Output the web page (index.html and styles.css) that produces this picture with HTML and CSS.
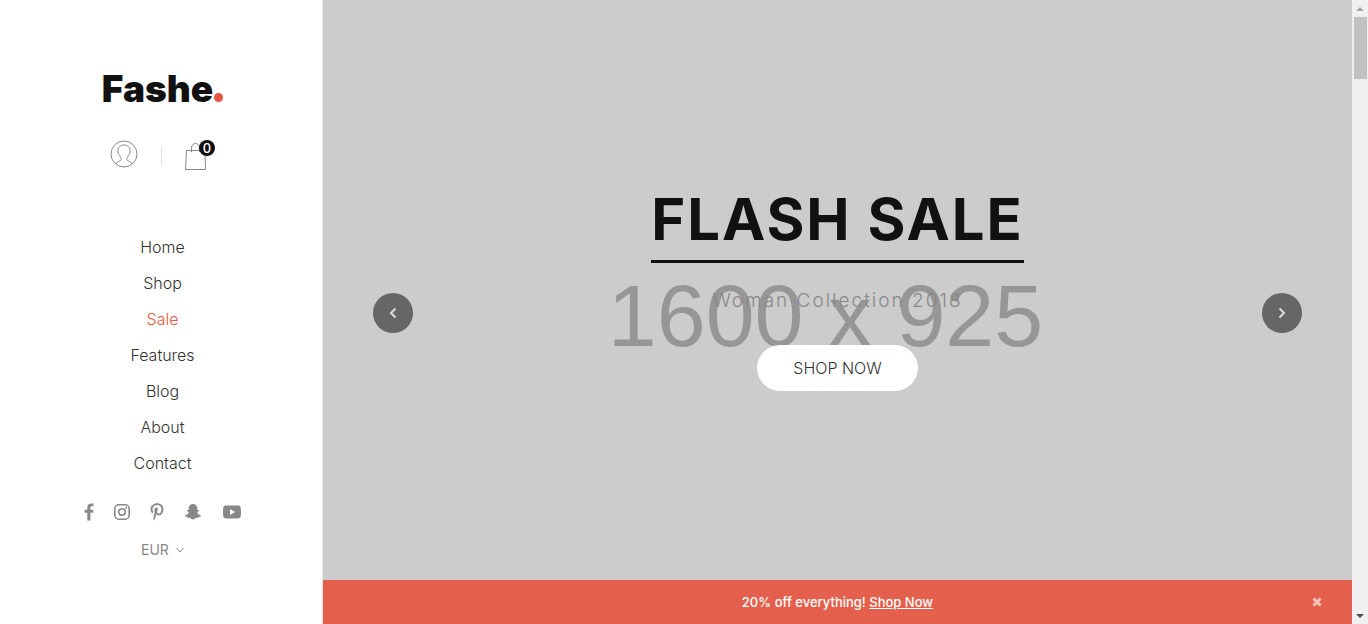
FILE: index.html
```html
<!DOCTYPE html>
<html lang="en">
<head>
<meta charset="utf-8">
<meta name="viewport" content="width=device-width, initial-scale=1">
<title>Fashe</title>
<link rel="stylesheet" href="styles.css">
</head>
<body>
<div class="page">
  <header class="sidebar">
    <a class="logo" href="#">Fashe<span class="logo-dot"></span></a>
    <div class="tools">
      <a class="tool account" href="#" aria-label="Account">
        <svg width="28" height="28" viewBox="0 0 28 28" fill="none" stroke="#888" stroke-width="1"><circle cx="14" cy="14" r="13"/><path d="M6 24C6.500 21.500 10.700 21.500 11.200 19.500C11.500 18 10 17 9.500 15C8.200 14.500 7.800 12.500 8 10.500C8 7 10.500 5 14 5C17.500 5 20 7 20 10.500C20.200 12.500 19.800 14.500 18.500 15C18 17 16.500 18 16.800 19.500C17.300 21.500 21.500 21.500 22 24"/></svg>
      </a>
      <span class="divider"></span>
      <a class="tool cart" href="#" aria-label="Cart">
        <svg width="22" height="28" viewBox="0 0 22 28" fill="none" stroke="#888" stroke-width="1"><path d="M1.500 7.500H20L20.500 26.500H.5ZM6.500 9V5C6.500 -1 14.500 -1 14.500 5V9"/></svg>
        <span class="badge">0</span>
      </a>
    </div>
    <nav class="menu">
      <a href="#">Home</a>
      <a href="#">Shop</a>
      <a class="active" href="#">Sale</a>
      <a href="#">Features</a>
      <a href="#">Blog</a>
      <a href="#">About</a>
      <a href="#">Contact</a>
    </nav>
    <div class="social">
      <a href="#" aria-label="Facebook"><svg width="10" height="18" viewBox="0 0 10 18"><path d="M9.500.6V3.300H7.900C6.700 3.300 6.400 3.900 6.400 4.800V6.700H9.400L9 9.700H6.400V17.400H3.300V9.700H.6V6.700H3.300V4.400C3.300 1.800 4.900.400 7.200.400C8.300.400 9.200.5 9.500.6Z"/></svg></a>
      <a href="#" aria-label="Instagram"><svg width="16" height="18" viewBox="0 0 16 18"><g fill="none" stroke="#888" stroke-width="1.600"><rect x=".8" y="1.800" width="14.400" height="14.400" rx="4"/><circle cx="8" cy="9" r="3.300"/></g><circle cx="12.200" cy="4.800" r="1"/></svg></a>
      <a href="#" aria-label="Pinterest"><svg width="14" height="18" viewBox="0 0 14 18"><path d="M.5 6.300C.5 2.700 3.800.3 7.300.3C10.700.3 13.400 2.600 13.400 5.900C13.400 9.300 11.600 12.300 8.700 12.300C7.700 12.300 6.700 11.800 6.300 11C5.500 14 5.300 15.200 3.800 17.500L3.500 17.600C3 14.700 4 12 4.700 9.300C3.800 7.700 4.400 4.400 6.600 4.400C9.400 4.400 6.800 8.400 7.100 9.600C7.300 10.200 8 10.600 8.600 10.600C10.700 10.600 11.400 7.500 11.400 5.900C11.400 3.500 9.500 2 7.200 2C4.600 2 2.500 3.800 2.500 6.500C2.500 7.800 3.300 8.400 3.300 8.700C3.300 9 3 10.200 2.600 10.200C2 10.200.5 9.100.5 6.300Z"/></svg></a>
      <a href="#" aria-label="Snapchat"><svg width="18" height="18" viewBox="0 0 18 18"><path d="M9 1C11.700 1 13.300 2.800 13.300 5C13.300 5.700 13.200 6.400 13.200 7C13.800 7.300 14.400 6.800 14.900 7.100C15.600 7.700 13.800 8.400 13.400 8.900C13 10 15 12.100 17 12.400C17.500 13.200 15.800 13.600 14.900 13.800C14.700 14.100 14.700 14.800 14.400 14.800C13.500 14.800 12.700 14.600 11.900 15.100C10.900 15.700 10.300 16.400 9 16.400C7.700 16.400 7.100 15.700 6.100 15.100C5.300 14.600 4.500 14.800 3.600 14.800C3.300 14.800 3.300 14.100 3.100 13.800C2.200 13.600.5 13.200 1 12.400C3 12.100 5 10 4.600 8.900C4.200 8.400 2.400 7.700 3.100 7.100C3.600 6.800 4.200 7.300 4.800 7C4.800 6.400 4.700 5.700 4.700 5C4.700 2.800 6.300 1 9 1Z"/></svg></a>
      <a href="#" aria-label="YouTube"><svg width="20" height="18" viewBox="0 0 20 18"><path fill-rule="evenodd" d="M4 2.600Q10 2.200 16 2.600C18.500 2.800 19 4 19 9S18.500 15.200 16 15.400Q10 15.800 4 15.400C1.500 15.200 1 14 1 9S1.500 2.800 4 2.600ZM8 6V12L13 9Z"/></svg></a>
    </div>
    <label class="currency" aria-label="Currency">
      <select><option>EUR</option><option>USD</option></select>
      <svg width="8" height="8" viewBox="0 0 8 8" fill="none" stroke="#888"><path d="M.5 2L4 6L7.500 2"/></svg>
    </label>
  </header>

  <main class="hero">
    <div class="placeholder" aria-hidden="true">1600 x 925</div>
    <div class="slide">
      <button class="arrow" aria-label="Previous"><svg width="8" height="12" viewBox="0 0 8 12"><path d="M6.500 1.500L2 6L6.500 10.500"/></svg></button>
      <div class="caption">
        <h1>FLASH SALE</h1>
        <p>Woman Collection 2018</p>
        <a class="shop" href="#">SHOP NOW</a>
      </div>
      <button class="arrow" aria-label="Next"><svg width="8" height="12" viewBox="0 0 8 12"><path d="M1.500 1.500L6 6L1.500 10.500"/></svg></button>
    </div>
    <div class="notice">
      <p>20% off everything! <a href="#">Shop Now</a></p>
      <button class="close" aria-label="Close"><svg width="10" height="10" viewBox="0 0 10 10"><path d="M1.500 1.500L8.500 8.500M8.500 1.500L1.500 8.500"/></svg></button>
    </div>
  </main>

  <div class="scrollbar" aria-hidden="true">
    <svg width="16" height="17" viewBox="0 0 16 17"><path fill="#a3a3a3" d="M4 11H12L8 7Z"/></svg>
    <div class="track"><div class="thumb"></div></div>
    <svg width="16" height="17" viewBox="0 0 16 17"><path fill="#505050" d="M4 7H12L8 11Z"/></svg>
  </div>
</div>
</body>
</html>
```
FILE: styles.css
```css
* { box-sizing: border-box; }
body { margin: 0; font-family: Inter, "Open Sans", sans-serif; color: #333; background: #fff; }
a { color: inherit; text-decoration: none; }
p, h1 { margin: 0; }
svg { display: block; }
button { border: 0; padding: 0; cursor: pointer; }

.page { display: flex; min-height: 100vh; }

.sidebar {
  flex: none;
  width: 323px;
  padding: 67px 0 0 3px;
  border-right: 1px solid #e6e6e6;
  display: flex;
  flex-direction: column;
  align-items: center;
}
.logo {
  display: flex;
  align-items: baseline;
  gap: 1px;
  font-size: 37px;
  line-height: 44px;
  font-weight: 900;
  color: #111;
}
.logo-dot { width: 9px; height: 9px; border-radius: 50%; background: #e65540; }

.tools { display: flex; align-items: center; gap: 23px; margin-top: 28px; }
.account { padding-bottom: 2px; }
.divider { width: 1px; height: 20px; margin-top: 2px; background: #e5e5e5; }
.cart { position: relative; padding-top: 4px; margin-right: 8px; }
.badge {
  position: absolute;
  top: 1px;
  right: -8px;
  width: 16px;
  height: 16px;
  border-radius: 50%;
  background: #111;
  color: #fff;
  font-size: 13px;
  line-height: 16px;
  font-weight: 500;
  text-align: center;
}

.menu { display: flex; flex-direction: column; align-items: center; margin-top: 58px; font-size: 16px; line-height: 36px; font-weight: 300; }
.menu .active { color: #e65540; }

.social { display: flex; gap: 20px; margin-top: 22px; fill: #888; }

.currency { display: flex; align-items: center; gap: 5px; margin-top: 20px; color: #888; }
.currency select {
  appearance: none;
  border: 0;
  padding: 0;
  background: none;
  color: inherit;
  font: 14px/18px Inter, sans-serif;
}

.hero {
  flex: 1;
  min-width: 0;
  display: grid;
  grid-template: minmax(0, 1fr) 44px / minmax(0, 1fr);
  background: #ccc;
}
.placeholder {
  grid-area: 1 / 1 / 3 / 2;
  align-self: center;
  padding: 8px 24px 0 0;
  text-align: center;
  white-space: nowrap;
  color: #969696;
  font-family: "Liberation Sans", sans-serif;
  font-size: 88px;
  line-height: 120px;
}
.slide {
  grid-area: 1 / 1 / 3 / 2;
  z-index: 1;
  display: flex;
  align-items: center;
  justify-content: space-between;
  padding: 2px 50px 0;
}
.arrow {
  width: 40px;
  height: 40px;
  border-radius: 50%;
  background: #666;
  display: grid;
  place-items: center;
}
.arrow svg { fill: none; stroke: #ddd; stroke-width: 2; }
.caption { display: flex; flex-direction: column; align-items: center; padding-bottom: 54px; }
.caption h1 {
  border-bottom: 3px solid #111;
  padding-bottom: 3px;
  color: #111;
  font-size: 58px;
  line-height: 76px;
  font-weight: 700;
  letter-spacing: 2px;
}
.caption p { margin-top: 26px; color: #888; font-size: 19px; line-height: 24px; letter-spacing: 2px; font-weight: 300; }
.shop {
  margin-top: 32px;
  padding: 0 36px;
  border-radius: 23px;
  background: #fff;
  font-size: 16px;
  line-height: 46px;
  font-weight: 300;
}

.notice {
  grid-area: 2 / 1;
  z-index: 2;
  display: grid;
  grid-template-columns: 40px 1fr 40px;
  align-items: center;
  padding: 0 15px;
  background: #e4604d;
  color: #fff;
  font-size: 13px;
  line-height: 20px;
  font-weight: 500;
}
.notice p { grid-column: 2; text-align: center; }
.notice a { text-decoration: underline; }
.close { justify-self: center; background: none; }
.close svg { stroke: #f6c3bc; stroke-width: 3; }

.scrollbar { flex: none; width: 16px; display: flex; flex-direction: column; background: #f0f0f0; }
.track { flex: 1; padding: 0 1px 0 2px; }
.thumb { height: 62px; background: #c1c1c1; }
```
